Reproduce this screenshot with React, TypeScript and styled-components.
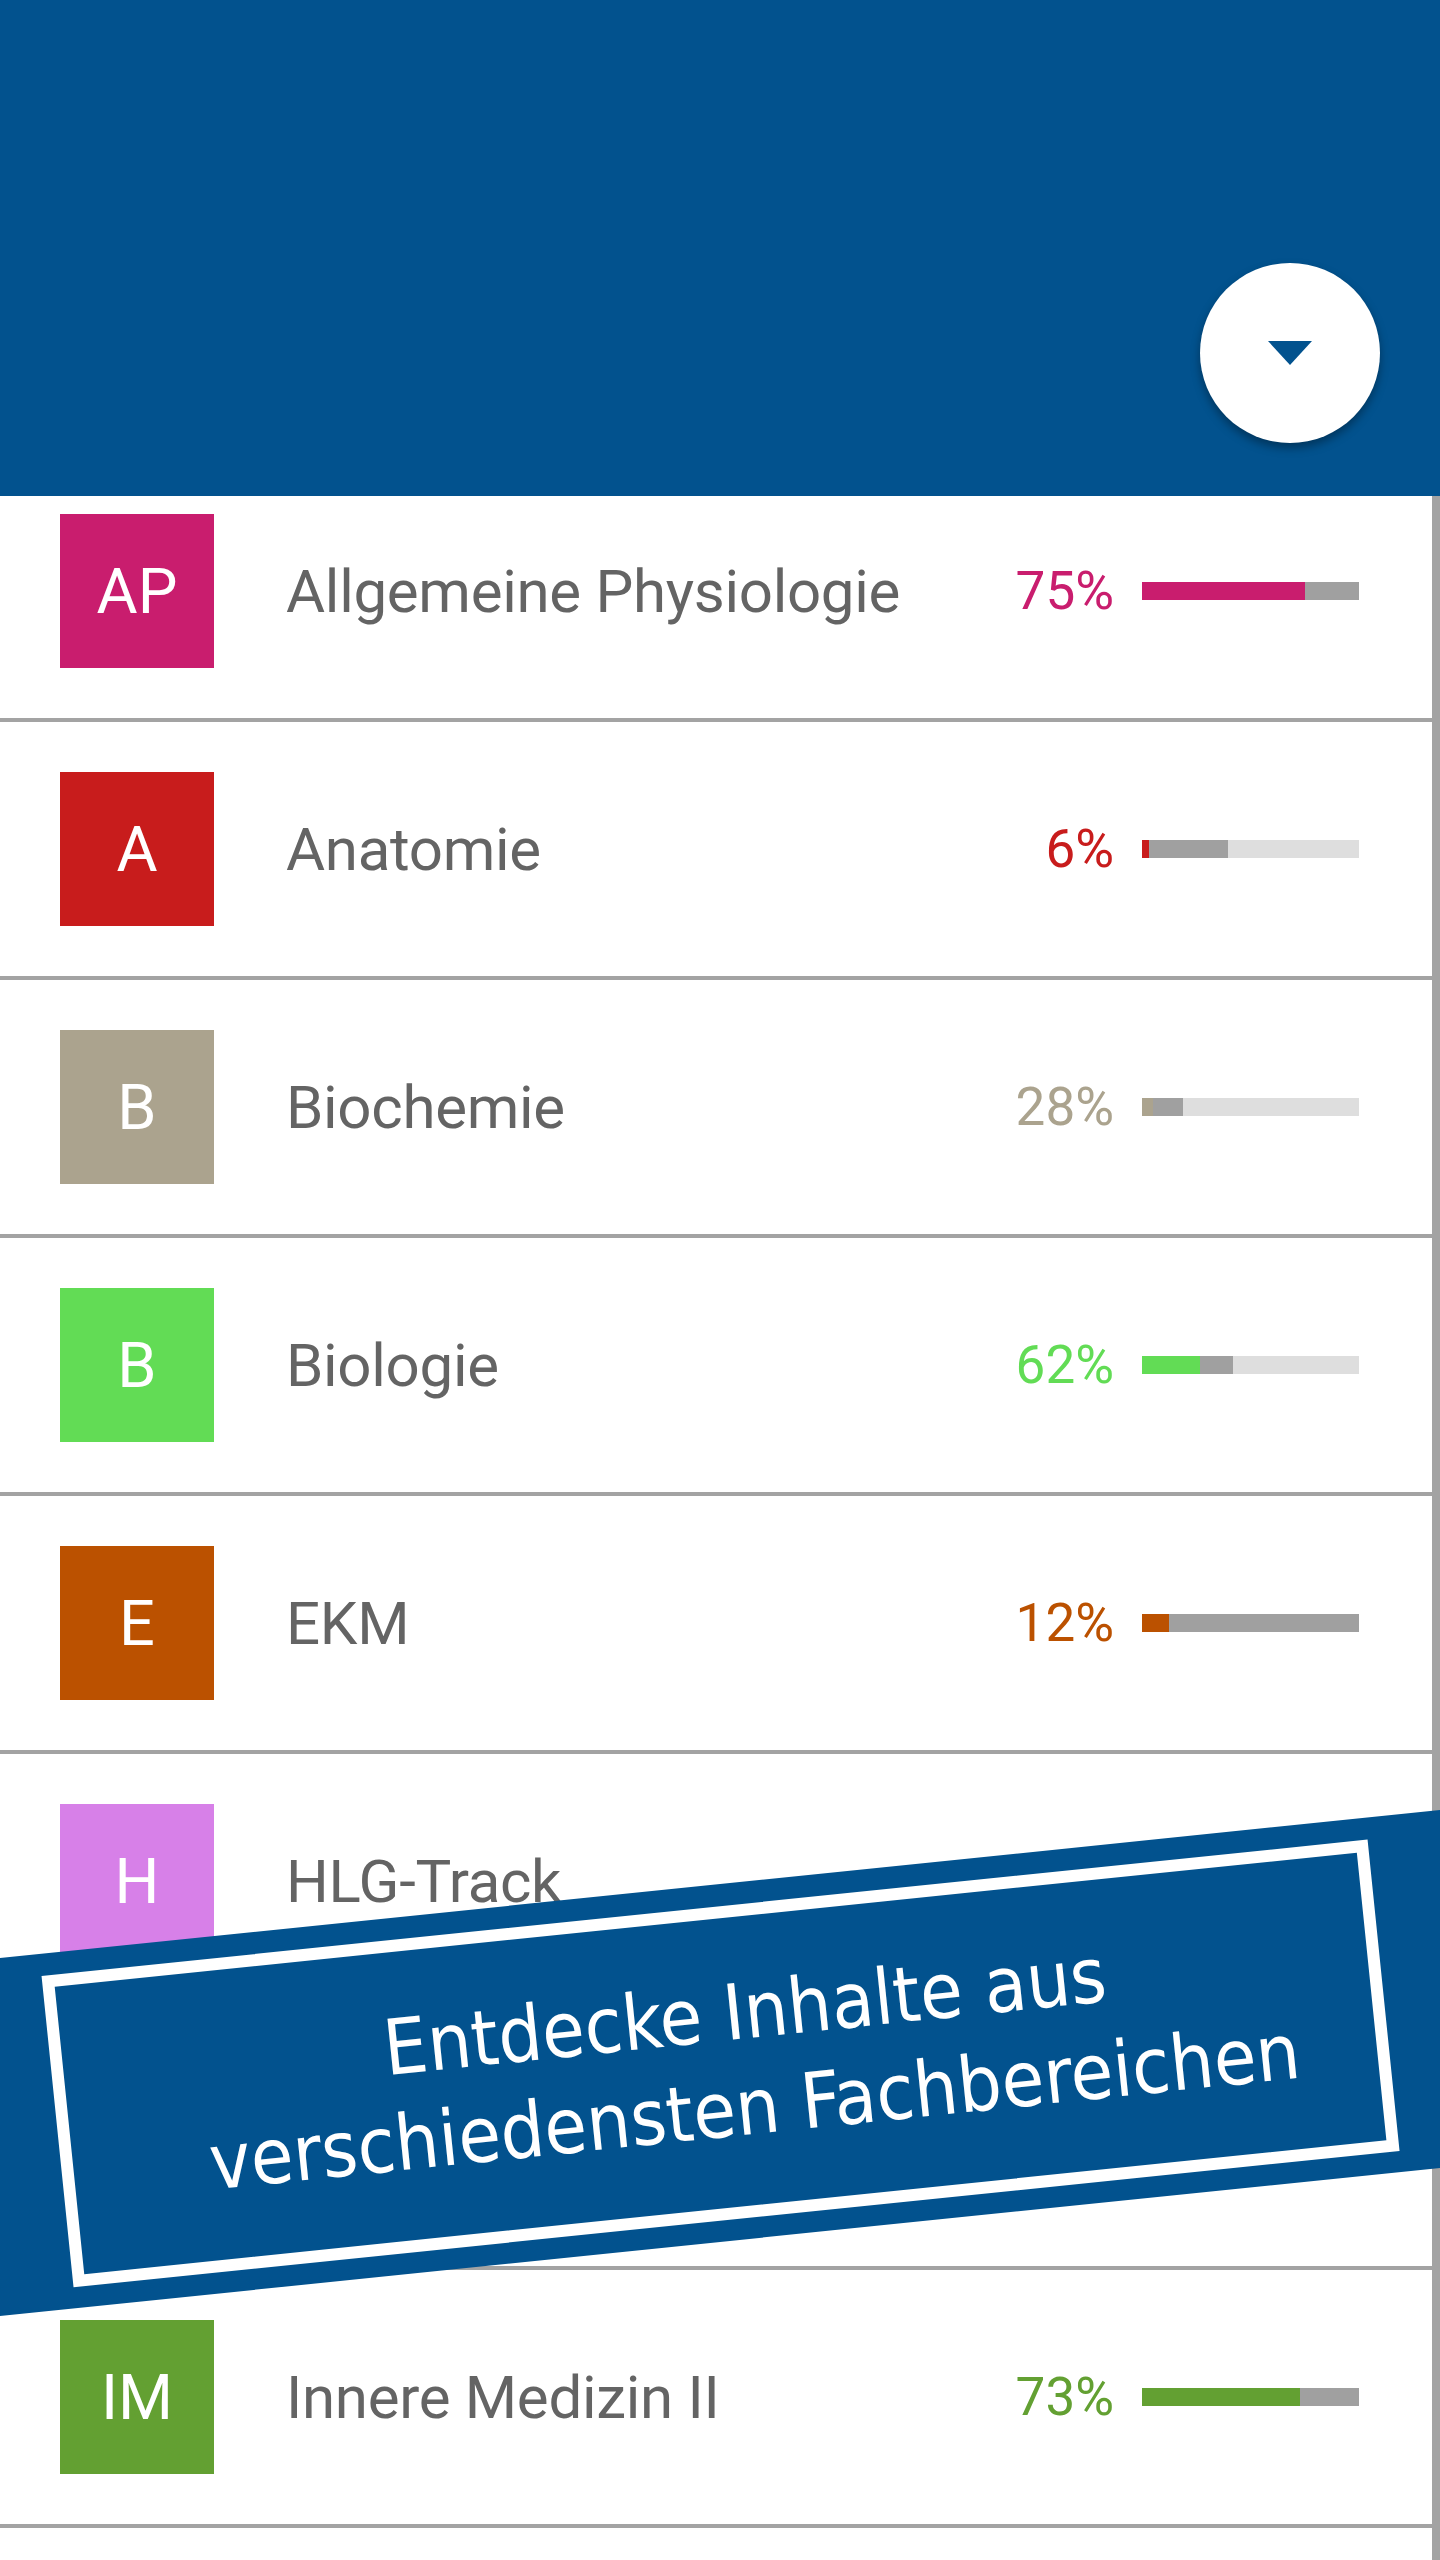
import React from "react";
import styled, { createGlobalStyle } from "styled-components";

const BLUE = "#02528e";

const GlobalStyle = createGlobalStyle`
  html, body {
    margin: 0;
    padding: 0;
    background: #ffffff;
    overflow: hidden;
  }
  * {
    box-sizing: border-box;
  }
`;

const Page = styled.div`
  position: relative;
  width: 1440px;
  height: 2560px;
  overflow: hidden;
  background: #ffffff;
  font-family: Roboto, "Liberation Sans", sans-serif;
`;

const Header = styled.header`
  position: relative;
  z-index: 1;
  height: 496px;
  background: ${BLUE};
  display: flex;
  justify-content: flex-end;
  align-items: flex-end;
  padding: 0 60px 53px 0;
`;

const Fab = styled.button`
  width: 180px;
  height: 180px;
  border: none;
  border-radius: 50%;
  background: #ffffff;
  box-shadow: 0 5px 10px rgba(0, 0, 0, 0.35);
  display: flex;
  align-items: center;
  justify-content: center;
  padding: 0;
  cursor: pointer;
`;

const Body = styled.div`
  display: flex;
  margin-top: -32px;
  height: 2096px;
`;

const List = styled.ul`
  flex: 1;
  list-style: none;
  margin: 0;
  padding: 0;
`;

const ScrollStrip = styled.div`
  width: 8px;
  background: #a3a3a3;
`;

const Row = styled.li`
  display: flex;
  align-items: center;
  height: 258px;
  padding: 0 73px 0 60px;
  border-bottom: 4px solid #a3a3a3;
`;

const Avatar = styled.div<{ $color: string }>`
  width: 154px;
  height: 154px;
  flex-shrink: 0;
  background: ${(p) => p.$color};
  color: #ffffff;
  font-size: 63px;
  display: flex;
  align-items: center;
  justify-content: center;
  overflow: hidden;
`;

const Label = styled.div`
  flex: 1;
  margin-left: 72px;
  font-size: 60px;
  letter-spacing: -0.3px;
  color: #646464;
  white-space: nowrap;
`;

const Percent = styled.div<{ $color: string }>`
  font-size: 53px;
  color: ${(p) => p.$color};
  text-align: right;
  white-space: nowrap;
`;

const Bar = styled.div`
  display: flex;
  width: 217px;
  height: 18px;
  margin-left: 28px;
  background: #dedede;
`;

const BarPart = styled.div<{ $color: string }>`
  height: 100%;
  background: ${(p) => p.$color};
`;

const Banner = styled.div`
  position: absolute;
  left: 50%;
  top: 2063px;
  width: 1760px;
  height: 356px;
  transform: translate(-50%, -50%) rotate(-5.87deg);
  background: ${BLUE};
  display: flex;
  align-items: center;
  justify-content: center;
  z-index: 2;
`;

const Frame = styled.div`
  width: 1333px;
  height: 313px;
  border: 12px solid #ffffff;
  display: flex;
  align-items: center;
  justify-content: center;
  padding-left: 60px;
`;

const BannerText = styled.p`
  margin: 0;
  color: #ffffff;
  font-family: "DejaVu Sans Condensed", "DejaVu Sans", sans-serif;
  font-stretch: condensed;
  font-size: 77px;
  line-height: 96px;
  text-align: center;
  white-space: nowrap;
`;

type Subject = {
  abbr: string;
  name: string;
  color: string;
  progress?: { percent: number; done: number; seen: number };
};

const subjects: Subject[] = [
  { abbr: "AP", name: "Allgemeine Physiologie", color: "#c91d6e", progress: { percent: 75, done: 163, seen: 54 } },
  { abbr: "A", name: "Anatomie", color: "#c81c1c", progress: { percent: 6, done: 7, seen: 79 } },
  { abbr: "B", name: "Biochemie", color: "#aba38e", progress: { percent: 28, done: 11, seen: 30 } },
  { abbr: "B", name: "Biologie", color: "#62dc55", progress: { percent: 62, done: 58, seen: 33 } },
  { abbr: "E", name: "EKM", color: "#bb5100", progress: { percent: 12, done: 27, seen: 190 } },
  { abbr: "H", name: "HLG-Track", color: "#d780e8" },
  { abbr: "IM", name: "Innere Medizin I", color: "#63a032" },
  { abbr: "IM", name: "Innere Medizin II", color: "#63a032", progress: { percent: 73, done: 158, seen: 59 } },
];

const DropIcon = () => (
  <svg width="44" height="24" viewBox="0 0 44 24">
    <polygon points="0,0 44,0 22,24" fill={BLUE} />
  </svg>
);

export default function App() {
  return (
    <>
      <GlobalStyle />
      <Page>
        <Header>
          <Fab aria-label="Fachbereich wählen">
            <DropIcon />
          </Fab>
        </Header>
        <Body>
          <List>
            {subjects.map((s, i) => (
              <Row key={i}>
                <Avatar $color={s.color}>{s.abbr}</Avatar>
                <Label>{s.name}</Label>
                {s.progress && (
                  <>
                    <Percent $color={s.color}>{s.progress.percent}%</Percent>
                    <Bar>
                      <BarPart $color={s.color} style={{ width: s.progress.done }} />
                      <BarPart $color="#a0a0a0" style={{ width: s.progress.seen }} />
                    </Bar>
                  </>
                )}
              </Row>
            ))}
          </List>
          <ScrollStrip />
        </Body>
        <Banner>
          <Frame>
            <BannerText>
              Entdecke Inhalte aus
              <br />
              verschiedensten Fachbereichen
            </BannerText>
          </Frame>
        </Banner>
      </Page>
    </>
  );
}
